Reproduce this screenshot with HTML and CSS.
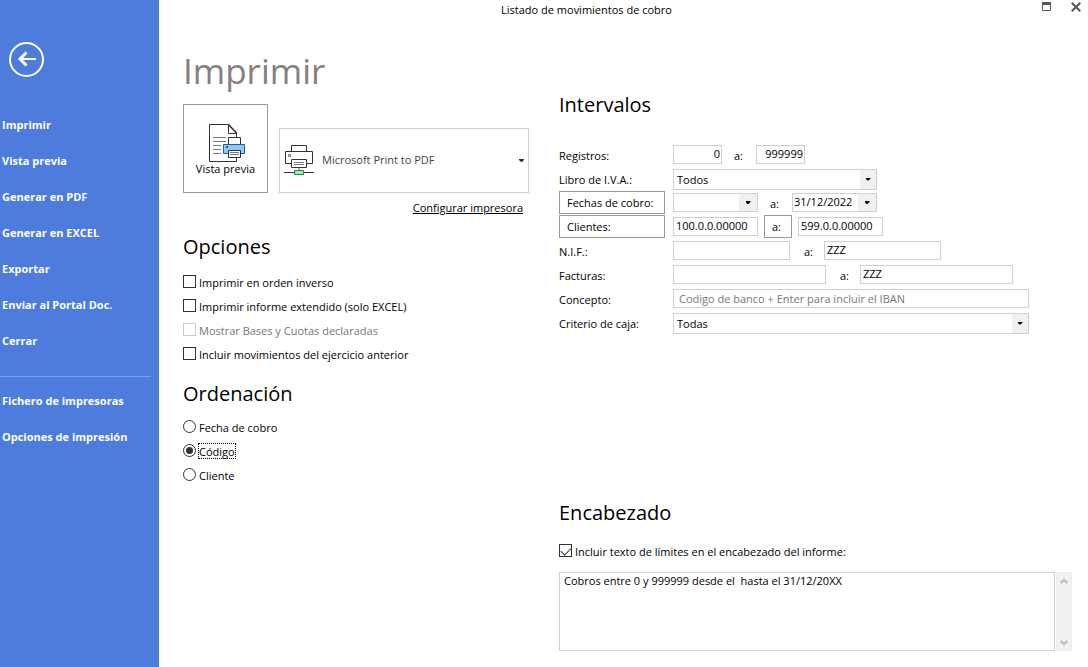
FILE: index.html
```html
<!DOCTYPE html>
<html lang="es">
<head>
<meta charset="utf-8">
<meta name="viewport" content="width=device-width, initial-scale=1">
<title>Listado de movimientos de cobro</title>
<link rel="stylesheet" href="styles.css">
</head>
<body class="app">
<nav class="sidebar">
  <button class="back" type="button" aria-label="Volver">
    <svg width="35" height="35" viewBox="0 0 35 35" fill="none" stroke="#fff"><circle cx="17.500" cy="17.500" r="16.500" stroke-width="2"/><path d="M27 17H10" stroke-width="2"/><path d="M17.500 10.500L11 17L17.500 23.500" stroke-width="3"/></svg>
  </button>
  <a class="nav-link" href="#">Imprimir</a>
  <a class="nav-link" href="#">Vista previa</a>
  <a class="nav-link" href="#">Generar en PDF</a>
  <a class="nav-link" href="#">Generar en EXCEL</a>
  <a class="nav-link" href="#">Exportar</a>
  <a class="nav-link" href="#">Enviar al Portal Doc.</a>
  <a class="nav-link" href="#">Cerrar</a>
  <hr class="divider">
  <a class="nav-link" href="#">Fichero de impresoras</a>
  <a class="nav-link" href="#">Opciones de impresión</a>
</nav>
<div class="window">
  <header class="titlebar">
    <span class="window-title">Listado de movimientos de cobro</span>
    <div class="window-controls">
      <button class="icon-button" type="button" aria-label="Maximizar"><svg width="9" height="9" viewBox="0 0 9 9"><path d="M.5 .5h8v8h-8z" fill="none" stroke="#58585a"/><path d="M0 0h9v3H0z" fill="#58585a"/></svg></button>
      <button class="icon-button" type="button" aria-label="Cerrar ventana"><svg width="10" height="10" viewBox="0 0 10 10"><path d="M.7 .7l8.600 8.600M9.300 .7L.7 9.300" stroke="#58585a" stroke-width="2"/></svg></button>
    </div>
  </header>
  <main class="content">
    <section class="print">
      <h1 class="page-title">Imprimir</h1>
      <div class="print-row">
        <button class="preview" type="button">
          <svg width="37" height="39" viewBox="0 0 37 39" fill="none">
            <path d="M.5 .5H19.500L27.500 9V37.500H.5z" fill="#fff" stroke="#333"/>
            <path d="M19.500 .5V9.500H27.500" stroke="#333"/><path d="M19.500 .5L27.500 9" stroke="#333" stroke-width="1.500"/>
            <path d="M4 13.500H17M4 17.500H17M4 21.500H12M4 25.500H12M4 29.500H12" stroke="#777"/>
            <path d="M19.500 13.500H31.500V21H19.500z" fill="#fff" stroke="#333"/>
            <path d="M14.500 20.500H35.500V29.500H14.500z" fill="#92c8f0" stroke="#0f62b0"/><path d="M17 22h2v2h-2z" fill="#0f62b0"/>
            <path d="M19.500 26.500H31.500V33.500H19.500z" fill="#fff" stroke="#333"/><path d="M21 28.500H30M21 30.500H30" stroke="#777"/>
          </svg>
          <span>Vista previa</span>
        </button>
        <div class="printer">
          <svg class="printer-icon" width="30" height="31" viewBox="0 0 30 31" fill="none">
            <path d="M7.500 7V.5H22.500V7" stroke="#333"/><path d="M7 18.500H1.500V6.500H28.500V18.500H23" stroke="#333"/><path d="M4.500 9.500h2v2h-2z" stroke="#777"/>
            <path d="M7.500 14.500H22.500V22.500H7.500z" fill="#fff" stroke="#333"/><path d="M10 17.500H20M10 19.500H20" stroke="#777"/>
            <path d="M15 23v3" stroke="#aaa" stroke-width="2"/><path d="M0 27.500H30" stroke="#333"/><path d="M10.500 25.500H19.500V29.500H10.500z" fill="#b5e0bc" stroke="#129640"/>
          </svg>
          <select class="printer-select" aria-label="Impresora"><option>Microsoft Print to PDF</option></select>
          <svg class="printer-arrow" width="5" height="3" viewBox="0 0 5 3"><path d="M0 0h5v1L3 3H2L0 1z" fill="#333"/></svg>
        </div>
      </div>
      <a class="configure" href="#">Configurar impresora</a>
      <h2 class="heading">Opciones</h2>
      <div class="choices">
        <label class="choice"><input class="box" type="checkbox"><span>Imprimir en orden inverso</span></label>
        <label class="choice"><input class="box" type="checkbox"><span>Imprimir informe extendido (solo EXCEL)</span></label>
        <label class="choice choice-disabled"><input class="box" type="checkbox" disabled><span>Mostrar Bases y Cuotas declaradas</span></label>
        <label class="choice"><input class="box" type="checkbox"><span>Incluir movimientos del ejercicio anterior</span></label>
      </div>
      <h2 class="heading">Ordenación</h2>
      <div class="choices choices-radio">
        <label class="choice"><input class="radio" type="radio" name="orden"><span>Fecha de cobro</span></label>
        <label class="choice"><input class="radio" type="radio" name="orden" checked><span class="focused">Código</span></label>
        <label class="choice"><input class="radio" type="radio" name="orden"><span>Cliente</span></label>
      </div>
    </section>
    <section class="ranges">
      <h2 class="heading heading-first">Intervalos</h2>
      <div class="form">
        <div class="row">
          <label class="label" for="reg1">Registros:</label>
          <input class="field field-number" id="reg1" value="0">
          <label class="to" for="reg2">a:</label>
          <input class="field field-number" id="reg2" value="999999">
        </div>
        <div class="row">
          <label class="label" for="libro">Libro de I.V.A.:</label>
          <div class="picker picker-medium"><select class="select" id="libro"><option>Todos</option></select><span class="arrow"></span></div>
        </div>
        <div class="row">
          <button class="label-button" type="button">Fechas de cobro:</button>
          <div class="date"><input class="date-input" aria-label="Fecha inicial" value=""><button class="arrow" type="button" aria-label="Abrir calendario inicial"></button></div>
          <label class="to" for="fecha2">a:</label>
          <div class="date"><input class="date-input" id="fecha2" value="31/12/2022"><button class="arrow" type="button" aria-label="Abrir calendario final"></button></div>
        </div>
        <div class="row">
          <button class="label-button" type="button">Clientes:</button>
          <input class="field field-code" aria-label="Cliente inicial" value="100.0.0.00000">
          <button class="to-button" type="button">a:</button>
          <input class="field field-code" aria-label="Cliente final" value="599.0.0.00000">
        </div>
        <div class="row">
          <label class="label" for="nif1">N.I.F.:</label>
          <input class="field field-nif" id="nif1" value="">
          <label class="to" for="nif2">a:</label>
          <input class="field field-nif" id="nif2" value="ZZZ">
        </div>
        <div class="row">
          <label class="label" for="fac1">Facturas:</label>
          <input class="field field-invoice" id="fac1" value="">
          <label class="to" for="fac2">a:</label>
          <input class="field field-invoice" id="fac2" value="ZZZ">
        </div>
        <div class="row">
          <label class="label" for="concepto">Concepto:</label>
          <input class="field field-wide" id="concepto" placeholder="Codigo de banco + Enter para incluir el IBAN">
        </div>
        <div class="row">
          <label class="label" for="criterio">Criterio de caja:</label>
          <div class="picker picker-wide"><select class="select" id="criterio"><option>Todas</option></select><span class="arrow"></span></div>
        </div>
      </div>
      <div class="caption">
        <h2 class="heading heading-first">Encabezado</h2>
        <label class="choice"><input class="box" type="checkbox" checked><span>Incluir texto de límites en el encabezado del informe:</span></label>
        <div class="memo">
          <textarea class="memo-text" aria-label="Texto del encabezado">Cobros entre 0 y 999999 desde el  hasta el 31/12/20XX</textarea>
          <div class="scrollbar">
            <svg width="8" height="6" viewBox="0 0 8 6"><path d="M.7 5L4 1.700L7.300 5" fill="none" stroke="#bcbcbc" stroke-width="2"/></svg>
            <svg width="8" height="6" viewBox="0 0 8 6"><path d="M.7 1L4 4.300L7.300 1" fill="none" stroke="#bcbcbc" stroke-width="2"/></svg>
          </div>
        </div>
      </div>
    </section>
  </main>
</div>
</body>
</html>
```
FILE: styles.css
```css
* { box-sizing: border-box; }

.app {
  margin: 0;
  min-height: 100vh;
  display: flex;
  background: #fff;
  color: #000;
  font-family: "Open Sans", "Noto Sans", sans-serif;
  font-size: 11px;
}

button, input, select, textarea { font: inherit; color: inherit; margin: 0; border-radius: 0; }
button { cursor: pointer; }
svg { display: block; }

.sidebar {
  width: 159px;
  flex: none;
  padding-top: 42px;
  display: flex;
  flex-direction: column;
  background: #4d7cdc;
}
.back { width: 35px; height: 35px; margin: 0 0 30px 9px; padding: 0; border: 0; background: none; }
.nav-link { padding-left: 2px; line-height: 36px; font-weight: 700; color: #fff; text-decoration: none; }
.divider { width: 151px; margin: 17px 0 6px; border: 0; border-top: 1px solid #7d9fe6; }

.window { flex: 1; min-width: 0; display: flex; flex-direction: column; }
.titlebar { display: flex; height: 20px; }
.window-title { flex: 1; text-align: center; line-height: 20px; }
.window-controls { width: 74px; display: flex; justify-content: flex-end; align-items: flex-start; gap: 20px; padding: 2px 7px 0 0; }
.icon-button { padding: 0; border: 0; background: none; }

.content {
  flex: 1;
  display: grid;
  grid-template-columns: 346px minmax(0, 1fr);
  gap: 30px;
  padding: 24px 16px 16px 24px;
}
.print, .ranges { display: flex; flex-direction: column; }
.page-title { margin: 0 0 6px; font-size: 35px; font-weight: 400; line-height: 54px; color: #857f83; }
.heading { margin: 12px 0 7px; font-size: 20px; font-weight: 400; line-height: 32px; }
.heading-first { margin-top: 0; }

.print-row { display: flex; align-items: flex-end; gap: 11px; }
.preview {
  width: 85px;
  height: 89px;
  display: flex;
  flex-direction: column;
  align-items: center;
  padding: 19px 0 0;
  border: 1px solid #999;
  background: #fff;
}
.preview svg { margin-left: 4px; }
.preview span { line-height: 12px; }
.printer { position: relative; flex: 1; }
.printer-select {
  appearance: none;
  display: block;
  width: 100%;
  height: 65px;
  padding: 0 20px 2px 42px;
  border: 1px solid #d0d0d0;
  background: #fff;
  color: #444;
}
.printer-icon { position: absolute; left: 5px; top: 17px; pointer-events: none; }
.printer-arrow { position: absolute; right: 5px; top: 31px; pointer-events: none; }
.configure { align-self: flex-end; margin: 4px 6px 0 0; color: #000; line-height: 22px; }

.choices { display: flex; flex-direction: column; }
.choices-radio { margin-top: -2px; }
.choice { display: flex; align-items: center; gap: 3px; height: 24px; line-height: 13px; }
.choice span { padding-top: 1px; }
.choice-disabled { color: #777; }
.box, .radio { appearance: none; flex: none; width: 13px; height: 13px; margin-bottom: 1px; border: 1px solid #333; background: #fff; }
.box { display: grid; place-content: center; }
.box:disabled { border-color: #ccc; }
.box:checked::before { content: ""; width: 9px; height: 5px; border: solid #333; border-width: 0 0 1px 1px; transform: translateY(-1px) rotate(-45deg); }
.radio { border-radius: 50%; display: grid; place-content: center; }
.radio:checked::before { content: ""; width: 7px; height: 7px; border-radius: 50%; background: #333; }
.focused { outline: 1px dotted #000; }

.ranges { padding-top: 45px; }
.ranges .heading-first { margin-bottom: 22px; }
.form { display: flex; flex-direction: column; }
.row { display: flex; align-items: center; height: 24px; }
.label { width: 114px; flex: none; padding-top: 2px; line-height: 22px; }
.label-button, .to-button { height: 23px; margin-bottom: 1px; border: 1px solid #999; background: #fff; text-align: left; }
.label-button { width: 106px; margin-right: 8px; padding: 0 7px; }
.to-button { width: 28px; margin-left: 6px; margin-right: 6px; padding: 0 7px; }
.to { width: 34px; padding: 2px 0 0 12px; line-height: 22px; }
.field { height: 19px; margin-bottom: 1px; padding: 0 2px 2px; border: 1px solid #d0d0d0; background: #fff; }
.field-number { width: 49px; padding-right: 1px; padding-left: 1px; text-align: right; }
.field-code { width: 85px; }
.field-nif { width: 117px; }
.field-invoice { width: 153px; }
.field-nif + .to, .field-invoice + .to { padding-left: 14px; }
.field-wide { width: 356px; padding: 0 5px; }
.field::placeholder { color: #777; opacity: 1; }

.picker { position: relative; display: flex; height: 21px; border: 1px solid #d0d0d0; }
.picker-medium { width: 204px; }
.picker-wide { width: 356px; }
.select { appearance: none; width: 100%; padding: 0 16px 0 3px; border: 0; background: #fff; }
.arrow { flex: none; width: 16px; padding: 0; border: 0; display: grid; place-content: center; background: #f0f0f0; }
.arrow::before { content: ""; width: 5px; height: 3px; background: #000; clip-path: polygon(0 0, 100% 0, 100% 34%, 60% 100%, 40% 100%, 0 34%); }
.picker .arrow { position: absolute; right: 0; top: 0; bottom: 0; pointer-events: none; }
.date { display: flex; width: 85px; height: 19px; margin-bottom: 1px; border: 1px solid #d0d0d0; }
.date-input { flex: 1; min-width: 0; padding: 0 1px 2px; border: 0; background: #fff; }
.date .arrow { width: 18px; }

.caption { margin-top: auto; }
.ranges .caption .heading-first { margin-bottom: 10px; }
.memo { display: flex; gap: 1px; margin-top: 9px; }
.memo-text { flex: 1; height: 79px; padding: 0 4px; border: 1px solid #d0d0d0; line-height: 16px; resize: none; overflow: hidden; }
.scrollbar { width: 16px; display: flex; flex-direction: column; justify-content: space-between; align-items: center; padding: 6px 0 5px; background: #f0f0f0; }
```
